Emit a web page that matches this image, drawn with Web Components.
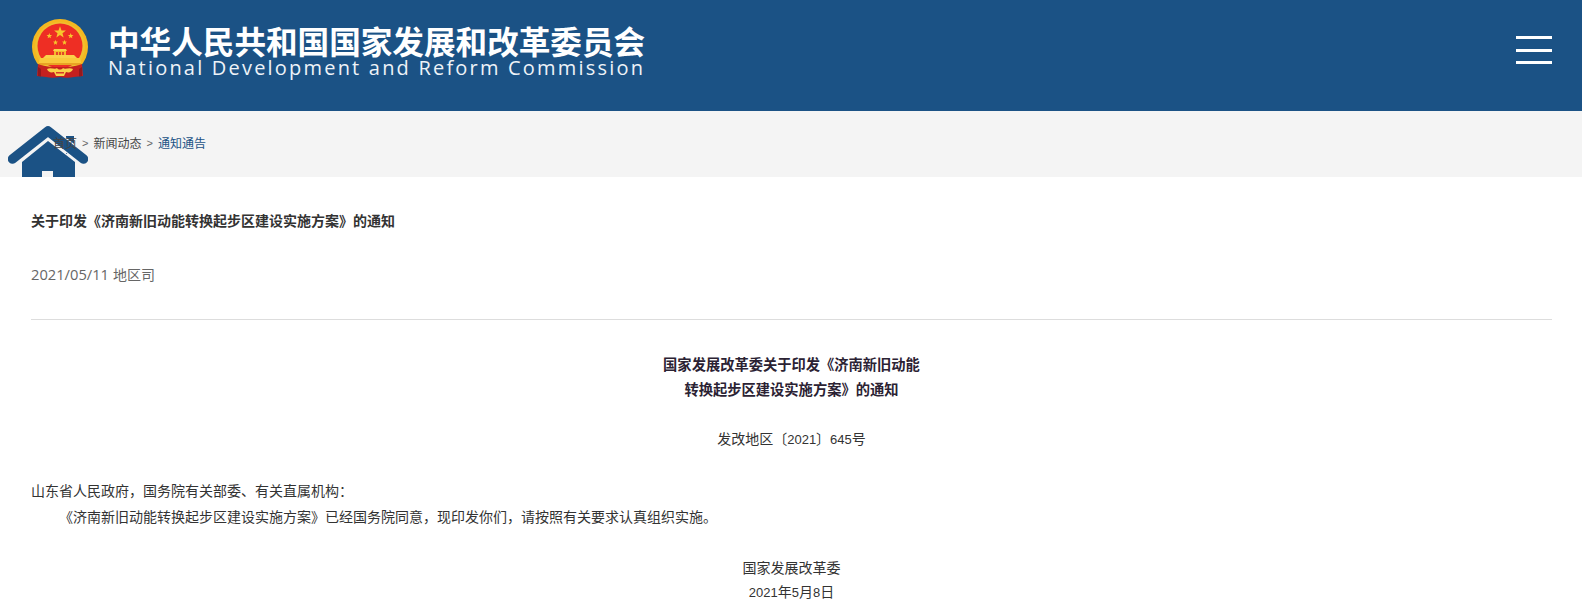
<!DOCTYPE html>
<html lang="zh-CN"><head><meta charset="utf-8">
<style>
html,body{margin:0;padding:0;background:#fff;overflow:hidden;height:603px}
body{font:14px/26px "Noto Sans CJK SC","Liberation Sans",sans-serif;color:#333}
</style></head><body>
<ndrc-header></ndrc-header>
<ndrc-crumbs></ndrc-crumbs>
<ndrc-article heading="关于印发《济南新旧动能转换起步区建设实施方案》的通知" date="2021/05/11" source="地区司">
  <doc-title>国家发展改革委关于印发《济南新旧动能<br>转换起步区建设实施方案》的通知</doc-title>
  <doc-center gap="24">发改地区〔<doc-num>2021</doc-num>〕<doc-num>645</doc-num>号</doc-center>
  <doc-para gap="26">山东省人民政府，国务院有关部委、有关直属机构：</doc-para>
  <doc-para indent>《济南新旧动能转换起步区建设实施方案》已经国务院同意，现印发你们，请按照有关要求认真组织实施。</doc-para>
  <doc-center gap="25">国家发展改革委</doc-center>
  <doc-center tight><doc-num>2021</doc-num>年<doc-num>5</doc-num>月<doc-num>8</doc-num>日</doc-center>
</ndrc-article>
<script>
function el(name, css, html){
  customElements.define(name, class extends HTMLElement{
    constructor(){super();this.attachShadow({mode:'open'});}
    connectedCallback(){
      this.shadowRoot.innerHTML='<style>'+css+'</style>'+(typeof html==='function'?html(this):html);
    }
  });
}
function star(x,y,r){
  var p=[];
  for(var i=0;i<10;i++){
    var a=-Math.PI/2+i*Math.PI/5, q=i%2?r*0.42:r;
    p.push((x+q*Math.cos(a)).toFixed(2)+','+(y+q*Math.sin(a)).toFixed(2));
  }
  return '<polygon points="'+p.join(' ')+'"/>';
}
el('ndrc-emblem',':host{display:block;width:56px;height:60px}svg{display:block}',`
<svg width="56" height="60" viewBox="0 0 56 60">
 <circle cx="28" cy="28" r="28" fill="#f5b81f"/>
 <circle cx="28" cy="28" r="25" fill="#f0c02f"/>
 <circle cx="28" cy="27" r="22.500" fill="#ee2e24"/>
 <g fill="#f7c62c">${star(28,13.5,6.2)}${star(17.300,17,2.900)}${star(38.700,17,2.900)}${star(23.500,23.500,2.700)}${star(32.500,23.500,2.700)}</g>
 <path d="M21 32l1-2h12l1 2z" fill="#f9d24a"/>
 <rect x="22" y="32" width="12" height="4" fill="#f6b92b"/>
 <rect x="24" y="33" width="2" height="3" fill="#e2462a"/><rect x="27" y="33" width="2" height="3" fill="#e2462a"/><rect x="30" y="33" width="2" height="3" fill="#e2462a"/>
 <path d="M14 36h28l3 3H11z" fill="#fad14a"/>
 <path d="M8 39h40l1 5H7z" fill="#f9c93c"/>
 <path d="M7 44h42v2H7z" fill="#e9a324"/>
 <path d="M6 45c8 3 15 3 22 3s14 0 22-3l1 12-9 1c-4 1-9 1-14 0-5 1-10 1-14 0l-9-1z" fill="#c4201f"/>
 <path d="M6 48v9l3 .5V50zM50 48v9l-3 .5V50z" fill="#96181c"/>
 <path d="M15 50c4-2 8 1 10-1 1.500 2 4.500 2 6 0 2 2 6-1 10 1-1 3-4 4-7 3l-2 4h-8l-2-4c-3 1-6 0-7-3z" fill="#f8d24a"/>
 <path d="M24 53h8v1.500h-8z" fill="#d73a28"/>
</svg>`);
el('ndrc-logo',`:host{display:flex;align-items:flex-start;gap:20px;color:#fff;font-family:"Noto Sans CJK SC","Liberation Sans",sans-serif}
 .t{display:flex;flex-direction:column;padding-top:4px}
 .zh{font-size:31.6px;line-height:34px;font-weight:700;white-space:nowrap}
 .en{font:20px/22px "Open Sans","Liberation Sans",sans-serif;letter-spacing:2.2px;white-space:nowrap;color:#eef3f8}`,
 `<ndrc-emblem></ndrc-emblem><div class="t"><div class="zh">中华人民共和国国家发展和改革委员会</div><div class="en">National Development and Reform Commission</div></div>`);
el('ndrc-menu-button',`:host{display:flex;flex-direction:column;gap:9.500px;width:36px}i{display:block;height:3px;background:#fff}`,'<i></i><i></i><i></i>');
el('ndrc-header',`:host{display:flex;justify-content:space-between;height:111px;background:#1b5285;padding:19px 30px 0 32px;box-sizing:border-box}
 ndrc-menu-button{margin-top:17px}`,
 `<ndrc-logo></ndrc-logo><ndrc-menu-button></ndrc-menu-button>`);
el('ndrc-crumbs',`:host{display:flex;align-items:center;position:relative;height:66px;background:#f4f4f4;overflow:hidden;padding:0 0 2px 53px;box-sizing:border-box;font-size:12px;line-height:66px;color:#444}
 svg{position:absolute;left:8px;top:15px;filter:blur(.5px)}
 .s{margin:0 5px;color:#666;font-family:"Liberation Sans",sans-serif;font-size:11px}
 a{color:#444;text-decoration:none;position:relative}a.cur{color:#1b5285}`,
 `<svg width="80" height="60" viewBox="0 0 80 60"><path d="M58 10h8v18h-8z" fill="#1b5285"/><path d="M4.500 33L40 5l35.500 28" fill="none" stroke="#f4f4f4" stroke-width="12"/><path d="M4.500 33L40 5l35.500 28" fill="none" stroke="#1b5285" stroke-width="9.500" stroke-linecap="round" stroke-linejoin="round"/><path d="M40 15l27 21v24H14V36z" fill="#1b5285"/><path d="M34 60V45h11v15z" fill="#f4f4f4"/></svg>
 <a>首页</a><span class="s">&gt;</span><a>新闻动态</a><span class="s">&gt;</span><a class="cur">通知通告</a>`);
el('ndrc-article',`:host{display:block;padding:0 30px 0 31px}
 h1{margin:0;padding-top:31px;font-size:14px;line-height:24px;font-weight:700;color:#333}
 .m{margin-top:30px;line-height:24px;font-size:14px;color:#666;padding-bottom:33px;border-bottom:1px solid #ddd}
 .d{font:14.700px "Open Sans","Liberation Sans",sans-serif;margin-right:1px}
 .b{padding-top:31px}`,
 h=>`<h1>${h.getAttribute('heading')}</h1><div class="m"><span class="d">${h.getAttribute('date')}</span> ${h.getAttribute('source')}</div><div class="b"><slot></slot></div>`);
el('doc-title',`:host{display:block;text-align:center;font-weight:700;font-size:14.280px;line-height:25px;color:#2b2233}`,'<slot></slot>');
el('doc-center',`:host{display:block;text-align:center;line-height:26px}:host([tight]){line-height:23px}`,h=>{if(h.hasAttribute('gap'))h.style.marginTop=h.getAttribute('gap')+'px';return '<slot></slot>'});
el('doc-para',`:host{display:block;line-height:26px}:host([indent]){text-indent:2em}`,h=>{if(h.hasAttribute('gap'))h.style.marginTop=h.getAttribute('gap')+'px';return '<slot></slot>'});
el('doc-num',`:host{display:inline;font-family:"Liberation Sans",sans-serif;font-size:13px;line-height:1}`,'<slot></slot>');
</script>
</body></html>
